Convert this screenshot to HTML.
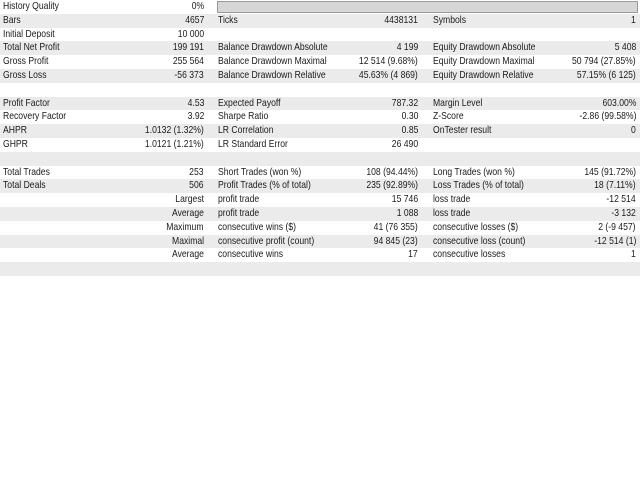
<!DOCTYPE html>
<html><head><meta charset="utf-8"><style>
body{margin:0;width:640px;height:480px;background:#fff;font-family:"Liberation Sans",Arial,sans-serif;font-size:10.5px;color:#1a1a1a;overflow:hidden}
.r{position:relative;height:13.8px;line-height:13.8px;white-space:nowrap}
.r:nth-child(even){background:#ebebeb}
.r span{position:absolute;top:0;transform:scaleX(0.82)}
.a,.c,.e{transform-origin:left center}
.b,.d,.f{transform-origin:right center}
.a{left:3px}.b{right:436px}.c{left:218px}.d{right:222px}.e{left:433px}.f{right:4px}
.bar{position:absolute;left:217px;top:1px;width:419px;height:10px;background:#d6d6d6;border:1px solid #9a9a9a}
</style></head><body>
<div class="r"><span class="a">History Quality</span><span class="b">0%</span><div class="bar"></div></div>
<div class="r"><span class="a">Bars</span><span class="b">4657</span><span class="c">Ticks</span><span class="d">4438131</span><span class="e">Symbols</span><span class="f">1</span></div>
<div class="r"><span class="a">Initial Deposit</span><span class="b">10 000</span></div>
<div class="r"><span class="a">Total Net Profit</span><span class="b">199 191</span><span class="c">Balance Drawdown Absolute</span><span class="d">4 199</span><span class="e">Equity Drawdown Absolute</span><span class="f">5 408</span></div>
<div class="r"><span class="a">Gross Profit</span><span class="b">255 564</span><span class="c">Balance Drawdown Maximal</span><span class="d">12 514 (9.68%)</span><span class="e">Equity Drawdown Maximal</span><span class="f">50 794 (27.85%)</span></div>
<div class="r"><span class="a">Gross Loss</span><span class="b">-56 373</span><span class="c">Balance Drawdown Relative</span><span class="d">45.63% (4 869)</span><span class="e">Equity Drawdown Relative</span><span class="f">57.15% (6 125)</span></div>
<div class="r"></div>
<div class="r"><span class="a">Profit Factor</span><span class="b">4.53</span><span class="c">Expected Payoff</span><span class="d">787.32</span><span class="e">Margin Level</span><span class="f">603.00%</span></div>
<div class="r"><span class="a">Recovery Factor</span><span class="b">3.92</span><span class="c">Sharpe Ratio</span><span class="d">0.30</span><span class="e">Z-Score</span><span class="f">-2.86 (99.58%)</span></div>
<div class="r"><span class="a">AHPR</span><span class="b">1.0132 (1.32%)</span><span class="c">LR Correlation</span><span class="d">0.85</span><span class="e">OnTester result</span><span class="f">0</span></div>
<div class="r"><span class="a">GHPR</span><span class="b">1.0121 (1.21%)</span><span class="c">LR Standard Error</span><span class="d">26 490</span></div>
<div class="r"></div>
<div class="r"><span class="a">Total Trades</span><span class="b">253</span><span class="c">Short Trades (won %)</span><span class="d">108 (94.44%)</span><span class="e">Long Trades (won %)</span><span class="f">145 (91.72%)</span></div>
<div class="r"><span class="a">Total Deals</span><span class="b">506</span><span class="c">Profit Trades (% of total)</span><span class="d">235 (92.89%)</span><span class="e">Loss Trades (% of total)</span><span class="f">18 (7.11%)</span></div>
<div class="r"><span class="b">Largest</span><span class="c">profit trade</span><span class="d">15 746</span><span class="e">loss trade</span><span class="f">-12 514</span></div>
<div class="r"><span class="b">Average</span><span class="c">profit trade</span><span class="d">1 088</span><span class="e">loss trade</span><span class="f">-3 132</span></div>
<div class="r"><span class="b">Maximum</span><span class="c">consecutive wins ($)</span><span class="d">41 (76 355)</span><span class="e">consecutive losses ($)</span><span class="f">2 (-9 457)</span></div>
<div class="r"><span class="b">Maximal</span><span class="c">consecutive profit (count)</span><span class="d">94 845 (23)</span><span class="e">consecutive loss (count)</span><span class="f">-12 514 (1)</span></div>
<div class="r"><span class="b">Average</span><span class="c">consecutive wins</span><span class="d">17</span><span class="e">consecutive losses</span><span class="f">1</span></div>
<div class="r"></div>
</body></html>
